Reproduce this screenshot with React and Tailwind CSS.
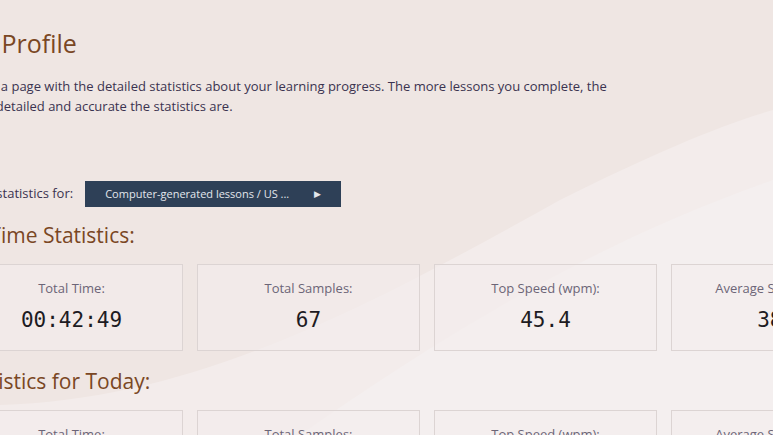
import React from "react";

const stats = [
  { label: "Total Time:", value: "00:42:49" },
  { label: "Total Samples:", value: "67" },
  { label: "Top Speed (wpm):", value: "45.4" },
  { label: "Average Speed (wpm):", value: "38.2" },
];

function StatCard({ label, value }) {
  return (
    <div className="flex h-[87px] flex-col items-center border border-[#dcd4d3] bg-[#f3eded]/60 pt-[15px]">
      <div className="text-[13px] leading-[17px] text-[#6c6577]">{label}</div>
      <div className="mt-[11px] font-['DejaVu_Sans_Mono',monospace] text-[21px] leading-[24px] text-[#1d1b22]">
        {value}
      </div>
    </div>
  );
}

function Background() {
  return (
    <svg
      className="absolute inset-0 h-full w-full"
      viewBox="0 0 773 435"
      preserveAspectRatio="none"
    >
      <rect width="773" height="435" fill="#efe6e3" />
      <path
        d="M0 405 C 200 400, 380 300, 560 200 C 650 155, 720 125, 773 110 L773 435 L0 435 Z"
        fill="#f3eceb"
      />
      <path
        d="M300 435 C 450 330, 600 240, 773 180 L773 435 Z"
        fill="#f4efef"
      />
    </svg>
  );
}

export default function App() {
  return (
    <div className="relative h-[435px] w-[773px] overflow-hidden font-['Open_Sans',sans-serif]">
      <Background />
      <div className="relative ml-[-40px] w-[934px] pt-[26px]">
        <h1 className="text-[25px] leading-[34px] text-[#7a4724]">My Profile</h1>
        <p className="mt-[16px] w-[660px] text-[13px] leading-[20px] text-[#3b3350]">
          This is a page with the detailed statistics about your learning progress. The more lessons you complete, the
          more detailed and accurate the statistics are.
        </p>

        <div className="mt-[65px] flex items-center gap-[12px]">
          <span className="text-[13px] text-[#3b3350]">Show statistics for:</span>
          <button
            type="button"
            className="flex h-[26px] w-[256px] items-center justify-between bg-[#2e4057] pl-[20px] pr-[20px] text-[11px] text-[#e2e6ec]"
          >
            <span>Computer-generated lessons / US ...</span>
            <span className="text-[9px]">▶</span>
          </button>
        </div>

        <h2 className="mt-[14px] text-[21px] leading-[28px] text-[#7a4724]">All Time Statistics:</h2>
        <div className="mt-[15px] grid grid-cols-[repeat(4,223px)] gap-[14px]">
          {stats.map((s) => (
            <StatCard key={s.label} {...s} />
          ))}
        </div>

        <h2 className="mt-[16px] text-[21px] leading-[28px] text-[#7a4724]">Statistics for Today:</h2>
        <div className="mt-[15px] grid grid-cols-[repeat(4,223px)] gap-[14px]">
          {stats.map((s) => (
            <StatCard key={s.label} {...s} />
          ))}
        </div>
      </div>
    </div>
  );
}
